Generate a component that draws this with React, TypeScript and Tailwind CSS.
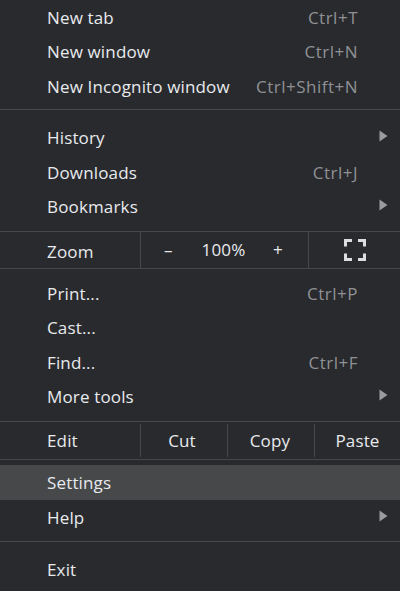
const font = { fontFamily: '"Open Sans", "Noto Sans", sans-serif' };

function Arrow() {
  return (
    <svg className="mb-[4px] h-[12px] w-[9px] text-[#9a9b9d]" viewBox="0 0 9 12" fill="currentColor">
      <path d="M0.5 0.5 L8.5 6 L0.5 11.5 Z" />
    </svg>
  );
}

function Row({ label, keys, sub, active }: { label: string; keys?: string; sub?: boolean; active?: boolean }) {
  return (
    <div className={`flex h-[34.5px] items-center pl-[47px] ${sub ? "pr-[12px]" : "pr-[42px]"} ${active ? "bg-[#47484a]" : ""}`}>
      <span className="flex-1 text-[#e8eaed]">{label}</span>
      {keys && <span className="tracking-[0.5px] text-[#8f9195]">{keys}</span>}
      {sub && <Arrow />}
    </div>
  );
}

function Sep() {
  return <div className="h-px bg-[#46474a]" />;
}

export default function App() {
  return (
    <div className="h-[591px] w-[400px] overflow-hidden bg-[#292a2d] text-[17px] tracking-[0.15px]" style={font}>
      <Row label="New tab" keys="Ctrl+T" />
      <Row label="New window" keys="Ctrl+N" />
      <Row label="New Incognito window" keys="Ctrl+Shift+N" />
      <div className="h-[5px]" />
      <Sep />
      <div className="h-[11px]" />
      <Row label="History" sub />
      <Row label="Downloads" keys="Ctrl+J" />
      <Row label="Bookmarks" sub />
      <div className="h-[7px]" />
      <Sep />

      <div className="flex h-[36px] items-stretch text-[#e8eaed]">
        <div className="flex w-[140px] items-center pl-[47px] pt-[3px]">Zoom</div>
        <div className="flex w-[168px] items-center border-l border-[#46474a]">
          <span className="w-[50px] pl-[23px]">–</span>
          <span className="w-[65px] text-center">100%</span>
          <span className="pl-[17px]">+</span>
        </div>
        <div className="flex flex-1 items-center justify-center border-l border-[#46474a]">
          <svg className="h-[22px] w-[22px] text-[#dcdde0]" viewBox="0 0 22 22" fill="none" stroke="currentColor" strokeWidth="3">
            <path d="M1.5 7.5V1.5H8M14 1.5H20.5V7.5M20.5 14.5V20.5H14M8 20.5H1.5V14.5" />
          </svg>
        </div>
      </div>
      <Sep />
      <div className="h-[7px]" />
      <Row label="Print..." keys="Ctrl+P" />
      <Row label="Cast..." />
      <Row label="Find..." keys="Ctrl+F" />
      <Row label="More tools" sub />
      <div className="h-[7px]" />
      <Sep />

      <div className="flex h-[37px] items-stretch text-[#e8eaed]">
        <div className="flex w-[140px] items-center pl-[47px]">Edit</div>
        <div className="my-[2px] flex w-[87px] items-center justify-center border-l border-[#46474a] pr-[4px]">Cut</div>
        <div className="my-[2px] flex w-[87px] items-center justify-center border-l border-[#46474a] pr-[2px]">Copy</div>
        <div className="my-[2px] flex flex-1 items-center justify-center border-l border-[#46474a]">Paste</div>
      </div>
      <Sep />
      <div className="h-[5px]" />
      <Row label="Settings" active />
      <div className="h-px" />
      <Row label="Help" sub />
      <div className="h-[6px]" />
      <Sep />
      <div className="h-[10px]" />
      <Row label="Exit" />
    </div>
  );
}
